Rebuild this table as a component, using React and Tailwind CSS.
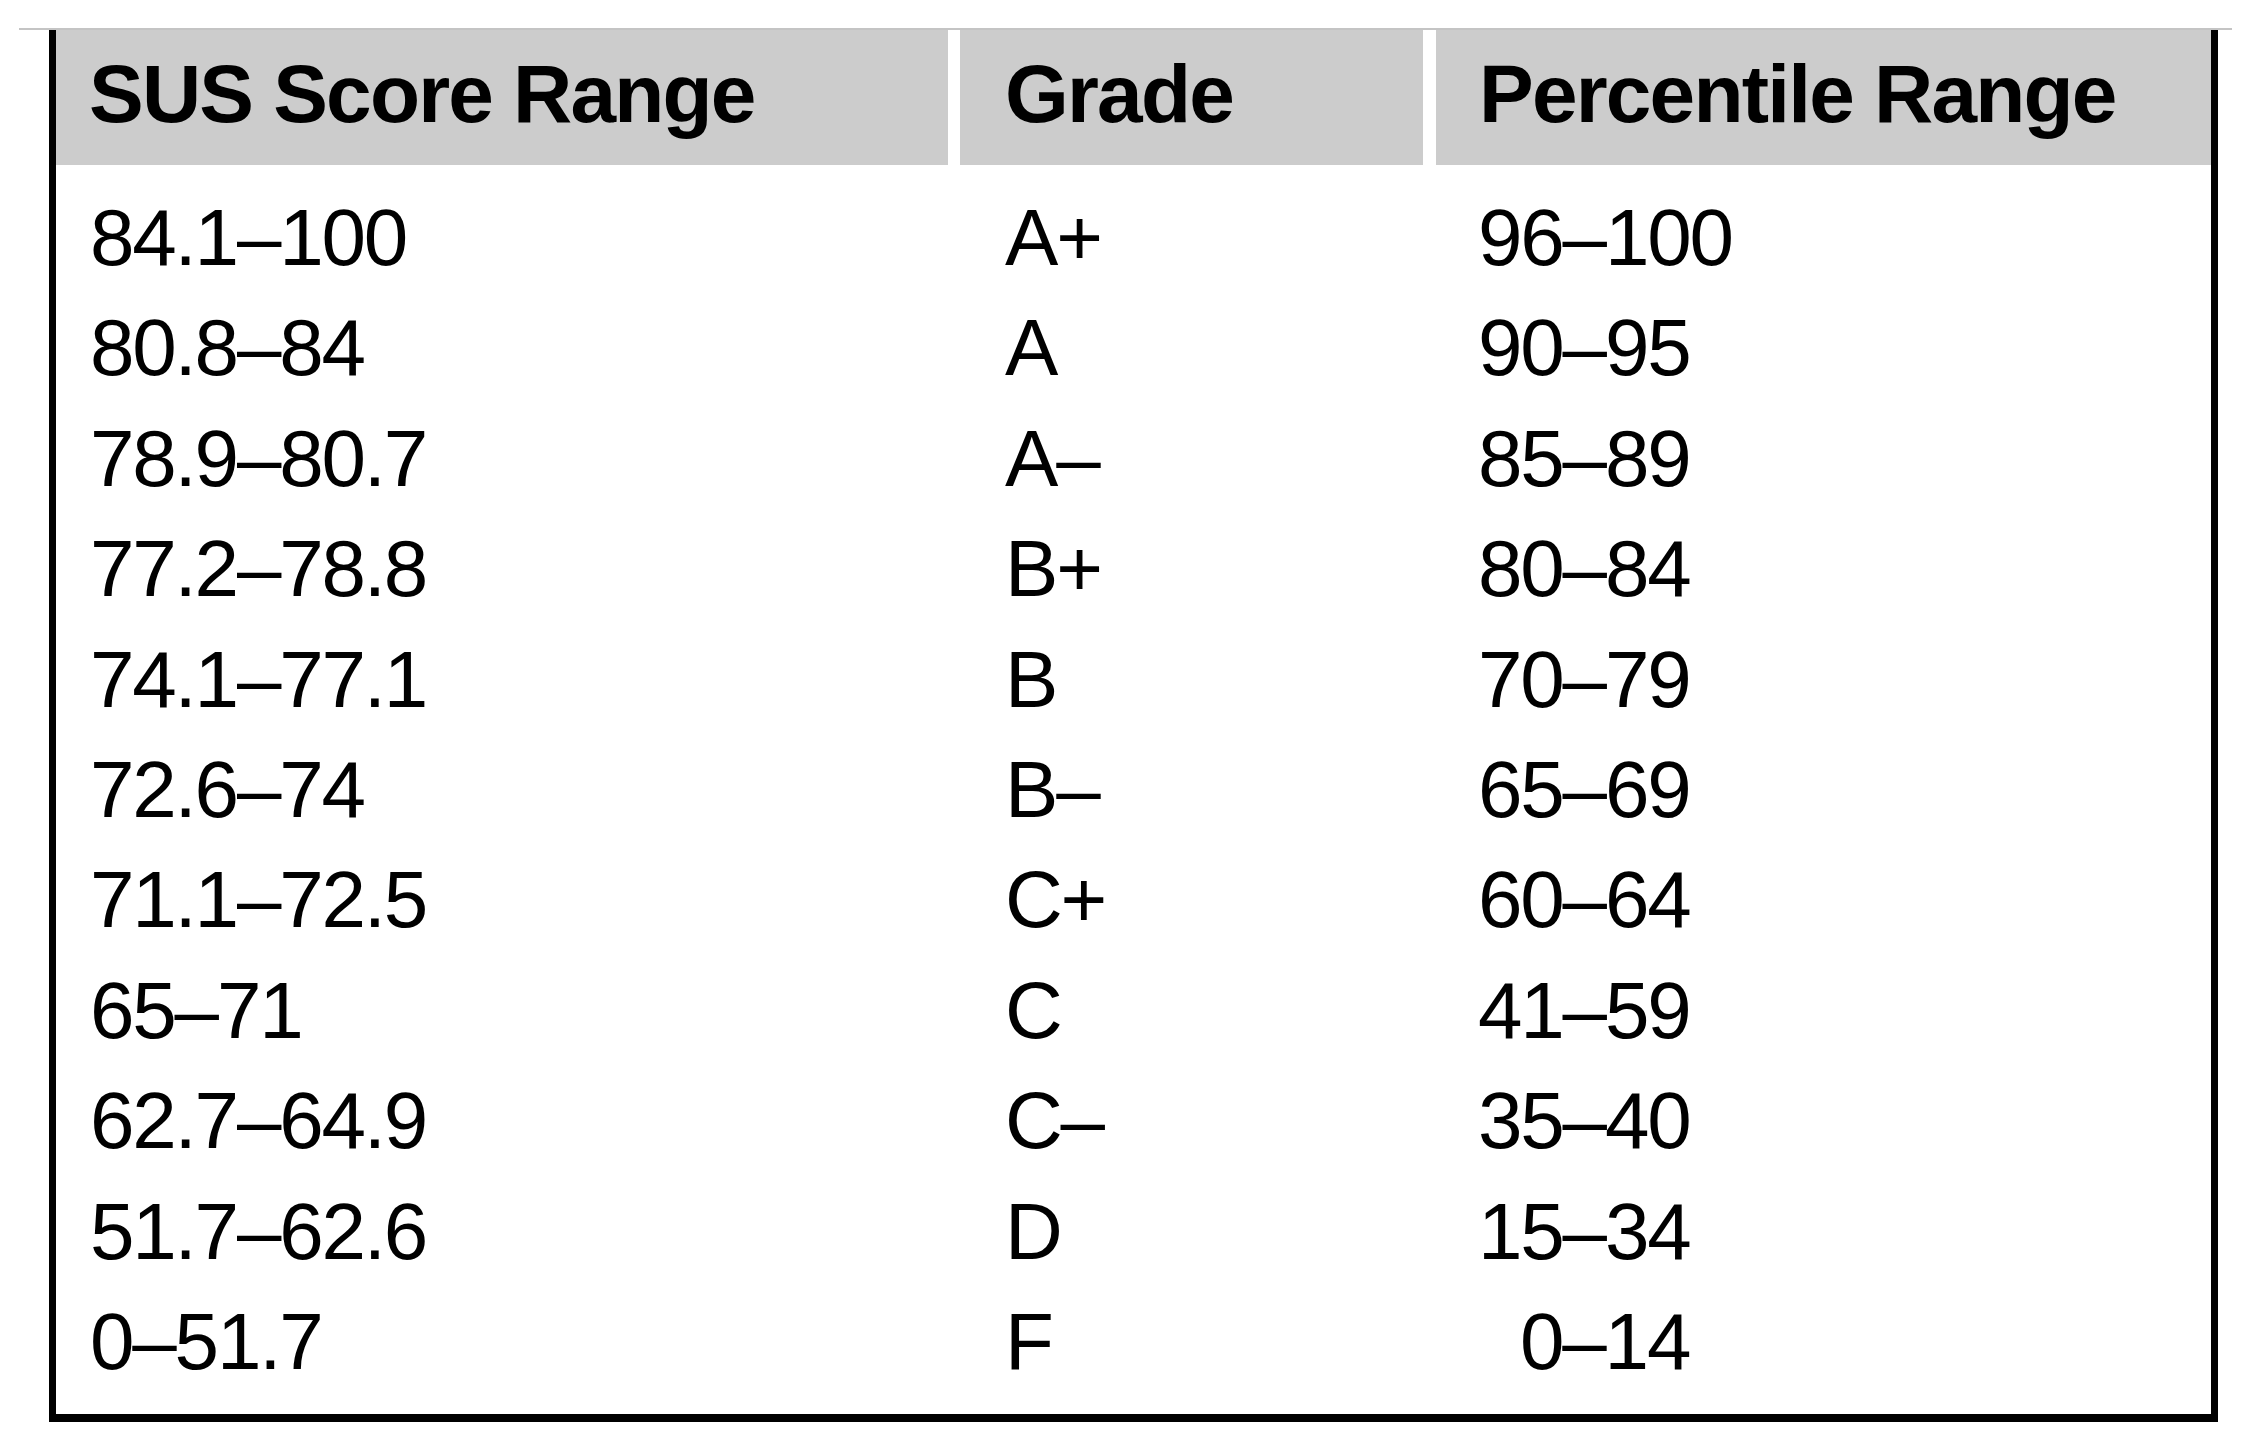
import React from 'react';

const rows = [
  { score: '84.1–100', grade: 'A+', pct: '96–100' },
  { score: '80.8–84', grade: 'A', pct: '90–95' },
  { score: '78.9–80.7', grade: 'A–', pct: '85–89' },
  { score: '77.2–78.8', grade: 'B+', pct: '80–84' },
  { score: '74.1–77.1', grade: 'B', pct: '70–79' },
  { score: '72.6–74', grade: 'B–', pct: '65–69' },
  { score: '71.1–72.5', grade: 'C+', pct: '60–64' },
  { score: '65–71', grade: 'C', pct: '41–59' },
  { score: '62.7–64.9', grade: 'C–', pct: '35–40' },
  { score: '51.7–62.6', grade: 'D', pct: '15–34' },
  { score: '0–51.7', grade: 'F', pct: '0–14', indent: true },
];

const App = () => {
  return (
    <div className="w-[2243px] h-[1448px] bg-white pt-[28px] text-black font-['Liberation_Sans',Arial,Helvetica,sans-serif]">
      {/* thin rule above the table */}
      <div className="ml-[19px] w-[2213px] h-[2px] bg-[#c4c4c4]" />

      <div className="ml-[49px] w-[2169px] border-x-[7px] border-b-[8px] border-black">
        {/* header */}
        <div className="flex h-[135px] text-[82px] font-bold tracking-[-1.8px] leading-[127px]">
          <div className="w-[892px] bg-[#cccccc] pl-[33px]">SUS Score Range</div>
          <div className="ml-[12px] w-[463px] bg-[#cccccc] pl-[45px]">Grade</div>
          <div className="ml-[13px] w-[775px] bg-[#cccccc] pl-[43px]">Percentile Range</div>
        </div>

        {/* body */}
        <div className="pt-[18px] pb-[17px] text-[80px] tracking-[-2.2px] leading-[110.4px]">
          {rows.map((r) => (
            <div key={r.score} className="flex">
              <div className="w-[892px] pl-[34px]">{r.score}</div>
              <div className="ml-[12px] w-[463px] pl-[45px]">{r.grade}</div>
              <div className={`ml-[13px] w-[775px] ${r.indent ? 'pl-[84px]' : 'pl-[42px]'}`}>
                {r.pct}
              </div>
            </div>
          ))}
        </div>
      </div>
    </div>
  );
};

export default App;
